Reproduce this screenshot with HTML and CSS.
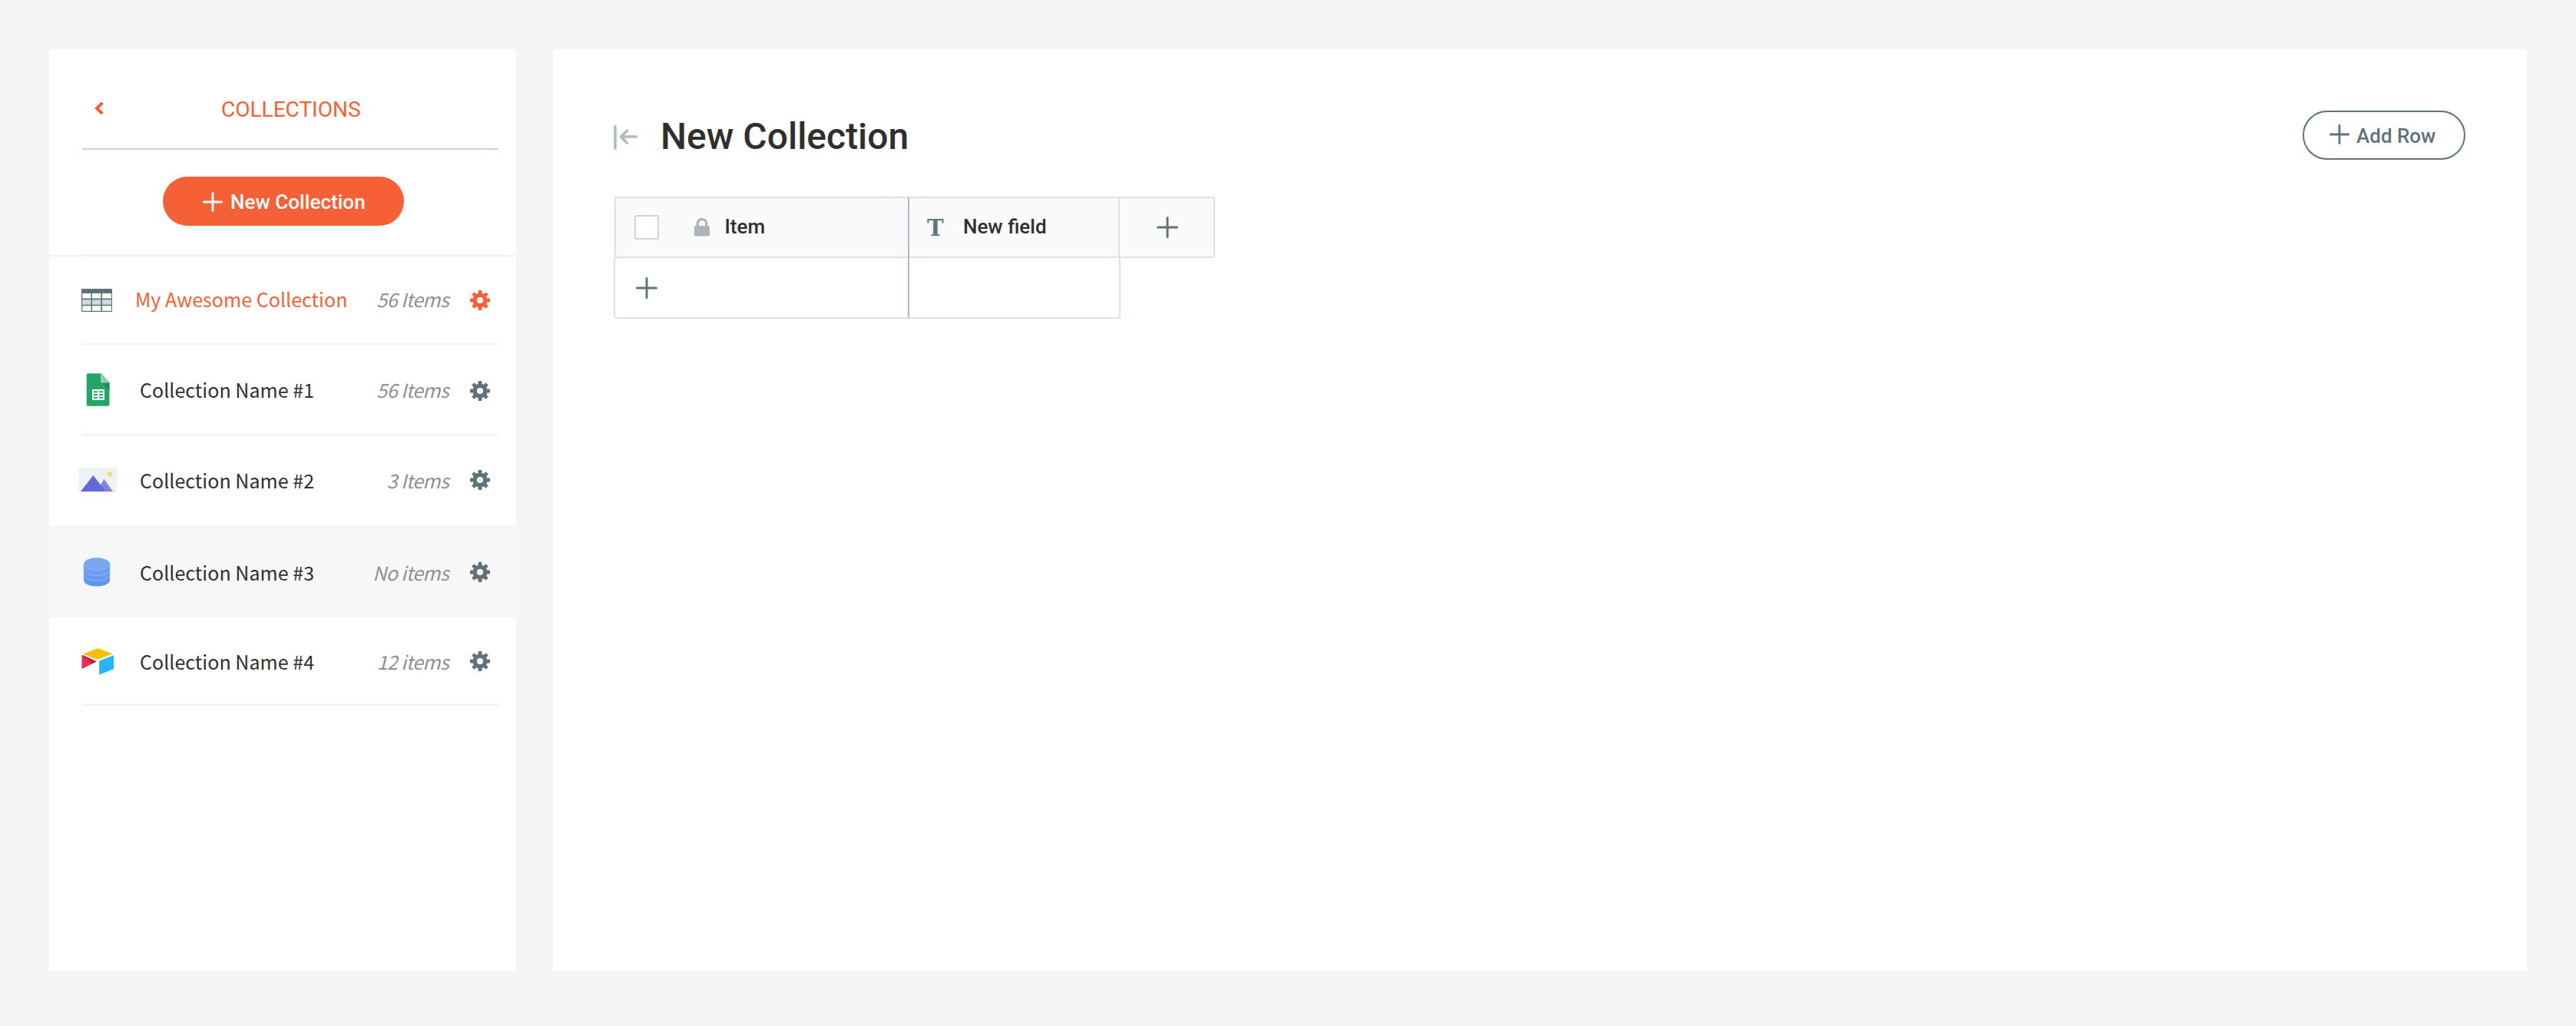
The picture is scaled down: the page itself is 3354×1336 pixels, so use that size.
FILE: index.html
```html
<!DOCTYPE html>
<html lang="en">
<head>
<meta charset="utf-8">
<title>Collections</title>
<link rel="stylesheet" href="styles.css">
</head>
<body>
<svg class="defs" width="0" height="0" aria-hidden="true">
  <symbol id="gear" viewBox="0 0 26 26">
    <g fill="currentColor">
      <rect x="10.6" y="0" width="4.8" height="26" rx="0.8"/>
      <rect x="10.6" y="0" width="4.8" height="26" rx="0.8" transform="rotate(45 13 13)"/>
      <rect x="10.6" y="0" width="4.8" height="26" rx="0.8" transform="rotate(90 13 13)"/>
      <rect x="10.6" y="0" width="4.8" height="26" rx="0.8" transform="rotate(135 13 13)"/>
      <circle cx="13" cy="13" r="9.6"/>
    </g>
    <circle class="gear-hole" cx="13" cy="13" r="4.1"/>
  </symbol>
  <symbol id="plus" viewBox="0 0 28 28">
    <path d="M14 1.5v25M1.5 14h25" fill="none" stroke="currentColor" stroke-width="3" stroke-linecap="round"/>
  </symbol>
</svg>
<div class="app">
  <aside class="sidebar">
    <header class="side-head">
      <svg class="back" viewBox="0 0 12 18"><path d="M10.300 1.800 3 9l7.300 7.200" fill="none" stroke="#f66036" stroke-width="4"/></svg>
      <h2 class="side-title">COLLECTIONS</h2>
    </header>
    <div class="side-action">
      <button class="btn btn-primary"><svg class="btn-plus"><use href="#plus"/></svg><span>New Collection</span></button>
    </div>
    <ul class="list">
      <li class="row row-1 active">
        <svg class="icon" viewBox="0 0 50 44"><rect x="3" y="7" width="40" height="30" rx="1" fill="#5f727a"/><path d="M4.200 13h11.300v6.500H4.200zM17 13h11.300v6.500H17zM30 13h12v6.500H30zM4.200 29.300h11.300v6.500H4.200zM17 29.300h11.300v6.500H17zM30 29.300h12v6.500H30z" fill="#fff"/><path d="M4.200 21.200h11.300v6.500H4.200zM17 21.200h11.300v6.500H17zM30 21.200h12v6.500H30z" fill="#cfd8df"/></svg>
        <span class="name">My Awesome Collection</span><span class="count">56 Items</span><svg class="gear"><use href="#gear"/></svg>
      </li>
      <li class="row row-2">
        <svg class="icon" viewBox="0 0 50 44"><path d="M12 .3h16.500L39.500 12v28.500a2.300 2.300 0 0 1-2.300 2.300H12a2.300 2.300 0 0 1-2.300-2.300V2.600A2.300 2.300 0 0 1 12 .3z" fill="#23a566"/><path d="M29 12.500H39.500v9.500z" fill="#1c8f5a"/><path d="M28 .3 39.500 12.500H30a2 2 0 0 1-2-2z" fill="#8ed1b1"/><path d="M17 21h16v14H17z" fill="#fff"/><path d="M19 23.200h5v2h-5zM26 23.200h5v2h-5zM19 27h5v2h-5zM26 27h5v2h-5zM19 30.800h5v2h-5zM26 30.800h5v2h-5z" fill="#23a566"/></svg>
        <span class="name">Collection Name #1</span><span class="count">56 Items</span><svg class="gear"><use href="#gear"/></svg>
      </li>
      <li class="row row-3">
        <svg class="icon" viewBox="0 0 50 44"><rect y="6" width="49" height="32" fill="#eef2f7"/><circle cx="40" cy="14.600" r="3.200" fill="#ffd76b"/><path d="M32.500 20.700 44 37H23z" fill="#8286e0"/><path d="M18.500 16 34.500 37H2z" fill="#6469da"/></svg>
        <span class="name">Collection Name #2</span><span class="count">3 Items</span><svg class="gear"><use href="#gear"/></svg>
      </li>
      <li class="row row-4 hover">
        <svg class="icon" viewBox="0 0 50 44"><path d="M6 12v21.500c0 4.500 7.600 8 17 8s17-3.500 17-8V12z" fill="#6195f1"/><path d="M6 12v14.500c0 4.500 7.600 8 17 8s17-3.500 17-8V12z" fill="#6a9bf2" stroke="#9dbff8" stroke-width=".6"/><path d="M6 12v7.500c0 4.500 7.600 8 17 8s17-3.500 17-8V12z" fill="#709ff2" stroke="#9dbff8" stroke-width=".6"/><ellipse cx="23" cy="12.500" rx="17" ry="8.200" fill="#7ba6f3" stroke="#9dbff8" stroke-width=".6"/></svg>
        <span class="name">Collection Name #3</span><span class="count">No items</span><svg class="gear"><use href="#gear"/></svg>
      </li>
      <li class="row row-5">
        <svg class="icon" viewBox="0 0 50 44"><path d="M23 5.500q1.300-.5 2.600 0L42 11.700q1 .6 0 1.200L25.600 19.600q-1.300.5-2.600 0L6.800 13.200q-1-.6 0-1.200z" fill="#fcbf04"/><path d="M26.200 22.300q0-.8.7-1.100L44.300 14.500q.9-.3.900.6V31.300q0 .8-.7 1.100L27 39.200q-.8.300-.8-.6z" fill="#27b5fb"/><path d="M3.500 15q0-1.300 1.200-.9L22 21.900q.6.500 0 .9L4.700 31.600q-1.200.4-1.200-.8z" fill="#ee3050"/><path d="M4.300 14.100 22 21.900q.6.500 0 .9L16.500 25.500z" fill="#b8253f"/></svg>
        <span class="name">Collection Name #4</span><span class="count">12 items</span><svg class="gear"><use href="#gear"/></svg>
      </li>
    </ul>
  </aside>
  <main class="main">
    <header class="main-head">
      <svg class="collapse" viewBox="0 0 32 32" fill="none" stroke="#b2bcbf" stroke-width="3.600" stroke-linecap="round" stroke-linejoin="round"><path d="M2 1.900v28.200M17.500 7.200 9.300 15l8.200 8.200M9.500 15h20"/></svg>
      <h1 class="title">New Collection</h1>
      <button class="btn btn-outline"><svg class="btn-plus"><use href="#plus"/></svg><span>Add Row</span></button>
    </header>
    <div class="table">
      <div class="tr thead">
        <div class="cell cell-item"><i class="check"></i><svg class="lock" viewBox="0 0 20 24"><path d="M4.200 12V7.300a5.800 5.800 0 0 1 11.600 0V12" fill="none" stroke="#adb8bc" stroke-width="3.400"/><rect y="10" width="20" height="13.500" rx="1.500" fill="#adb4bb"/></svg><span class="label">Item</span></div>
        <div class="cell cell-field"><b class="type">T</b><span class="label">New field</span></div>
        <div class="cell cell-add"><svg class="plus"><use href="#plus"/></svg></div>
      </div>
      <div class="tr tbody">
        <div class="cell cell-item"><svg class="plus"><use href="#plus"/></svg></div>
        <div class="cell cell-field"></div>
      </div>
    </div>
  </main>
</div>
</body>
</html>
```
FILE: styles.css
```css
* { box-sizing: border-box; }
body { margin: 0; background: #f4f6f6; color: #2f2f2f; font-family: Roboto, "Liberation Sans", sans-serif; }
h1, h2, ul { margin: 0; padding: 0; font-weight: inherit; }
svg { display: block; flex: none; }
.defs { position: absolute; }
.app { display: flex; gap: 48px; width: 3354px; height: 1336px; padding: 64px 64px 72px; }
.sidebar { width: 608px; background: #fff; }
.main { width: 2570px; background: #fff; padding: 80px 80px 0 79px; }

/* Sidebar header and action */
.side-head { display: flex; align-items: center; height: 131px; margin: 0 23px 0 43px; padding-top: 29px; border-bottom: 2px solid #cbd2d4; }
.back { width: 12px; height: 18px; margin: 0 0 5px 16px; }
.side-title { flex: 1; padding-left: 153px; font-size: 28px; line-height: 32px; color: #f66036; }
.side-action { height: 137px; margin: 0 23px 0 43px; padding: 35px 0 0 105px; border-bottom: 1px solid #f0f2f2; }

.btn { display: flex; align-items: center; height: 64px; border-radius: 32px; font: 500 26px/32px Roboto, "Liberation Sans", sans-serif; }
.btn-plus { width: 26px; height: 26px; }
.btn-primary { width: 314px; padding: 2px 0 0 52px; gap: 10px; border: 0; background: #f66036; color: #fff; letter-spacing: 0.04px; }
.btn-outline { width: 212px; margin-left: auto; padding: 0 0 0 33px; gap: 9px; border: 2px solid #5f727a; background: #fff; color: #5f727a; }
.btn-outline .btn-plus { margin-bottom: 2px; }
.btn-outline span { padding-top: 2px; }

/* Collection list */
.list { list-style: none; border-top: 2px solid #f0f2f2; }
.row { display: flex; align-items: center; padding-left: 39px; font: 25px/36px "Noto Sans CJK SC", sans-serif; position: relative; }
.row::after { content: ""; position: absolute; left: 43px; right: 23px; bottom: 0; height: 2px; background: #f0f2f2; }
.row-1 { height: 115px; padding-bottom: 1px; }
.row-2 { height: 118px; }
.row-3 { height: 117px; padding-bottom: 1px; }
.row-4 { height: 120px; }
.row-5 { height: 115px; padding-bottom: 1px; }
.row-3::after, .row-4::after { display: none; }
.hover { background: #f7f7f7; }
.icon { width: 50px; height: 44px; }
.name { flex: 1; padding-left: 29px; letter-spacing: 0.04px; }
.active .name { padding-left: 23px; color: #f66036; }
.count { font-style: italic; color: #8f8f8f; letter-spacing: -0.6px; }
.row-1 .name, .row-1 .count { margin-bottom: 4px; }
.row-2 .name, .row-2 .count { margin-bottom: 2px; }
.row-4 .name, .row-4 .count { margin-top: 2px; }
.gear { width: 26px; height: 26px; margin: 0 34px 0 28px; color: #5f727a; }
.row-2 .gear, .row-4 .gear { margin-top: 2px; }
.active .gear { color: #f66036; }
.gear-hole { fill: #fff; }

/* Main area */
.main-head { display: flex; height: 64px; align-items: center; }
.collapse { width: 32px; height: 32px; margin-top: 6px; }
.title { padding: 4px 0 0 29px; font-size: 48px; line-height: 56px; font-weight: 500; }
.table { margin-top: 48px; }
.tr { display: flex; height: 80px; }
.thead { width: 782px; margin-left: 1px; border: 2px solid #dde1ea; border-radius: 3px; background: #fafafa; }
.tbody { width: 660px; height: 81px; margin-top: -2px; border: 2px solid #dde1ea; border-radius: 3px; }
.cell { display: flex; align-items: center; }
.cell-item { width: 382px; border-right: 2px solid #b0b8c9; }
.thead .cell-item { margin-top: -1px; padding: 1px 0 0 24px; }
.tbody .cell-item { width: 383px; margin: -2px 0 -1px; padding: 2px 0 1px 27px; }
.thead .cell-field { width: 274px; padding-left: 23px; border-right: 2px solid #dde1ea; }
.cell-add { flex: 1; padding-left: 48px; }
.check { width: 32px; height: 32px; border: 2px solid #cdd5d7; border-radius: 3px; background: #fff; }
.lock { width: 20px; height: 24px; margin-left: 46px; }
.label { font-size: 26px; line-height: 32px; font-weight: 500; padding: 0 0 3px 19.500px; }
.cell-field .label { padding: 0 0 2px 23px; }
.type { font: bold 29px/32px "DejaVu Serif", serif; color: #63747a; width: 24px; padding-top: 2px; }
.plus { width: 28px; height: 28px; color: #63747a; }
```
